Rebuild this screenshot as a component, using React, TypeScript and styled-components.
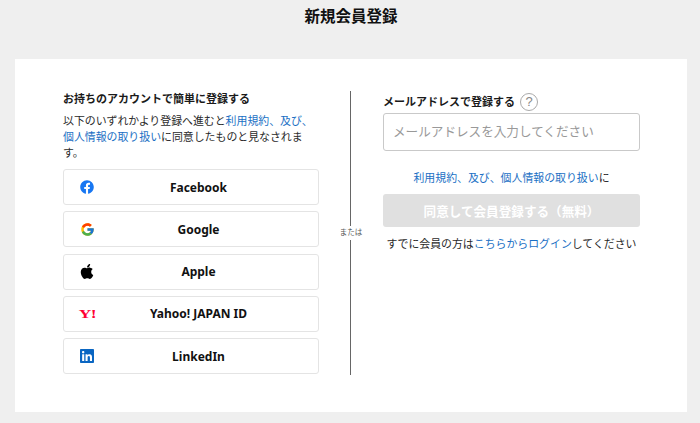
import React from 'react';
import styled, {createGlobalStyle} from 'styled-components';
import {FaApple, FaFacebook, FaLinkedin} from 'react-icons/fa';
import {FcGoogle} from 'react-icons/fc';

const GlobalStyle = createGlobalStyle`
  html, body {
    margin: 0;
    padding: 0;
    background: #efefef;
    color: #222;
    font-family: "Liberation Sans", "Noto Sans CJK JP", sans-serif;
  }
`;

const Page = styled.div`
  width: 700px;
  height: 423px;
  padding: 0 13px 11px 15px;
  box-sizing: border-box;
  display: flex;
  flex-direction: column;
  overflow: hidden;
`;

const Heading = styled.h1`
  margin: 0;
  height: 59px;
  padding-top: 6px;
  box-sizing: border-box;
  text-align: center;
  font-size: 15.5px;
  line-height: 21px;
  font-weight: 700;
  color: #111;
`;

const Card = styled.main`
  flex: 1;
  background: #fff;
  padding: 32px 47px 37px 48px;
  display: grid;
  grid-template-columns: 256px 1fr 257px;
`;

const Column = styled.section`
  display: flex;
  flex-direction: column;
`;

const SectionTitle = styled.h2`
  margin: 0;
  font-size: 11px;
  line-height: 16px;
  font-weight: 700;
  color: #1a1a1a;
`;

const Lead = styled.p`
  margin: 6px 0 8px;
  font-size: 10.9px;
  line-height: 16px;
  color: #2a2a2a;
`;

const Link = styled.a`
  color: #1a6fc4;
  text-decoration: none;
`;

const Providers = styled.div`
  display: flex;
  flex-direction: column;
  gap: 6.3px;
`;

const Provider = styled.button`
  position: relative;
  height: 36px;
  padding: 0 0 0 15px;
  background: #fff;
  border: 1px solid #e4e4e4;
  border-radius: 3px;
  font-family: "Noto Sans", "Liberation Sans", sans-serif;
  font-size: 12px;
  font-weight: 700;
  color: #111;
  display: flex;
  align-items: center;
  justify-content: center;
`;

const ProviderIcon = styled.span<{$color?: string}>`
  position: absolute;
  left: 15px;
  top: 9px;
  width: 16px;
  height: 16px;
  display: flex;
  align-items: center;
  justify-content: center;
  color: ${p => p.$color || '#000'};
`;

const YahooMark = styled.span`
  color: #ff0033;
  font-family: "Liberation Serif", serif;
  font-weight: 700;
  font-size: 13px;
  letter-spacing: -0.5px;
  transform: scaleX(1.35);
`;

const Divider = styled.div`
  position: relative;
  justify-self: center;
  width: 1px;
  margin-right: 1px;
  background: #666;
`;

const DividerLabel = styled.span`
  position: absolute;
  left: -12px;
  top: 135px;
  width: 26px;
  padding: 2px 0;
  background: #fff;
  text-align: center;
  font-size: 7.5px;
  line-height: 10px;
  color: #555;
`;

const TitleRow = styled.div`
  display: flex;
  align-items: center;
  gap: 5px;
  height: 20px;
  margin-bottom: 2px;
  padding-top: 1px;
  box-sizing: border-box;
`;

const HelpMark = styled.span`
  width: 18px;
  height: 18px;
  box-sizing: border-box;
  border: 1px solid #aaa;
  border-radius: 50%;
  display: flex;
  align-items: center;
  justify-content: center;
  font-size: 13px;
  color: #888;
`;

const EmailInput = styled.input`
  height: 38px;
  padding: 0 9px;
  box-sizing: border-box;
  width: 100%;
  border: 1px solid #c9c9c9;
  border-radius: 3px;
  background: #fff;
  font-family: inherit;
  font-size: 12.6px;
  &::placeholder {
    color: #999;
    opacity: 1;
  }
`;

const Agreement = styled.p`
  margin: 19px 0 8px;
  text-align: center;
  font-size: 10.9px;
  line-height: 16px;
  color: #2a2a2a;
`;

const Submit = styled.button`
  height: 33px;
  padding: 0;
  border: 0;
  border-radius: 3px;
  background: #e0e0e0;
  color: #fff;
  font-family: inherit;
  font-size: 12.6px;
  font-weight: 700;
`;

const LoginNote = styled.p`
  margin: 9px 0 0;
  text-align: center;
  font-size: 10.9px;
  line-height: 16px;
  color: #2a2a2a;
`;

const providers = [
    {name: 'Facebook', icon: <FaFacebook size={14} />, color: '#1877f2'},
    {name: 'Google', icon: <FcGoogle size={15} />},
    {name: 'Apple', icon: <FaApple size={17} />, color: '#000'},
    {name: 'Yahoo! JAPAN ID', icon: <YahooMark>Y!</YahooMark>},
    {name: 'LinkedIn', icon: <FaLinkedin size={16} />, color: '#0a66c2'},
];

const App = () => {
    return (
        <Page>
            <GlobalStyle />
            <Heading>新規会員登録</Heading>
            <Card>
                <Column>
                    <SectionTitle>お持ちのアカウントで簡単に登録する</SectionTitle>
                    <Lead>
                        以下のいずれかより登録へ進むと<Link>利用規約、及び、個人情報の取り扱い</Link>に同意したものと見なされます。
                    </Lead>
                    <Providers>
                        {providers.map(p => (
                            <Provider key={p.name}>
                                <ProviderIcon $color={p.color}>{p.icon}</ProviderIcon>
                                {p.name}
                            </Provider>
                        ))}
                    </Providers>
                </Column>
                <Divider>
                    <DividerLabel>または</DividerLabel>
                </Divider>
                <Column>
                    <TitleRow>
                        <SectionTitle>メールアドレスで登録する</SectionTitle>
                        <HelpMark>?</HelpMark>
                    </TitleRow>
                    <EmailInput placeholder="メールアドレスを入力してください" />
                    <Agreement>
                        <Link>利用規約、及び、個人情報の取り扱い</Link>に
                    </Agreement>
                    <Submit>同意して会員登録する（無料）</Submit>
                    <LoginNote>
                        すでに会員の方は<Link>こちらからログイン</Link>してください
                    </LoginNote>
                </Column>
            </Card>
        </Page>
    );
};

export default App;
